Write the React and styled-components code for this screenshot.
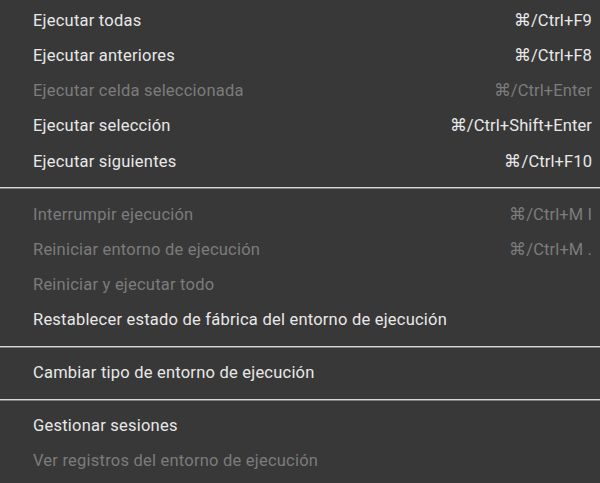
import React from 'react';
import styled, { createGlobalStyle } from 'styled-components';

const GlobalStyle = createGlobalStyle`
  html, body {
    margin: 0;
    padding: 0;
    background: #383838;
  }
`;

const Menu = styled.div`
  width: 600px;
  height: 483px;
  box-sizing: border-box;
  padding-top: 2.4px;
  background: #383838;
  font-family: Roboto, "Liberation Sans", sans-serif;
  font-size: 16.5px;
  overflow: hidden;
`;

const Item = styled.div`
  display: flex;
  align-items: center;
  justify-content: space-between;
  height: 35.25px;
  padding: 0 8px 0 33px;
  color: ${(p) => (p.disabled ? '#7c7c7c' : '#e8e8e8')};
  white-space: nowrap;
`;

const Label = styled.span`
  letter-spacing: 0.22px;
`;

const Shortcut = styled.span`
  letter-spacing: 0.1px;
`;

const Separator = styled.div`
  height: 1px;
  margin: 8.4px 0 8.35px;
  background: #d8d8d8;
  box-shadow: 0 1px 0 rgba(255, 255, 255, 0.35);
`;

const groups = [
  [
    { label: 'Ejecutar todas', key: '⌘/Ctrl+F9' },
    { label: 'Ejecutar anteriores', key: '⌘/Ctrl+F8' },
    { label: 'Ejecutar celda seleccionada', key: '⌘/Ctrl+Enter', disabled: true },
    { label: 'Ejecutar selección', key: '⌘/Ctrl+Shift+Enter' },
    { label: 'Ejecutar siguientes', key: '⌘/Ctrl+F10' },
  ],
  [
    { label: 'Interrumpir ejecución', key: '⌘/Ctrl+M I', disabled: true },
    { label: 'Reiniciar entorno de ejecución', key: '⌘/Ctrl+M .', disabled: true },
    { label: 'Reiniciar y ejecutar todo', disabled: true },
    { label: 'Restablecer estado de fábrica del entorno de ejecución' },
  ],
  [{ label: 'Cambiar tipo de entorno de ejecución' }],
  [
    { label: 'Gestionar sesiones' },
    { label: 'Ver registros del entorno de ejecución', disabled: true },
  ],
];

export default function App() {
  return (
    <>
      <GlobalStyle />
      <Menu>
        {groups.map((items, gi) => (
          <React.Fragment key={gi}>
            {gi > 0 && <Separator />}
            {items.map((it) => (
              <Item key={it.label} disabled={it.disabled}>
                <Label>{it.label}</Label>
                {it.key && <Shortcut>{it.key}</Shortcut>}
              </Item>
            ))}
          </React.Fragment>
        ))}
      </Menu>
    </>
  );
}
